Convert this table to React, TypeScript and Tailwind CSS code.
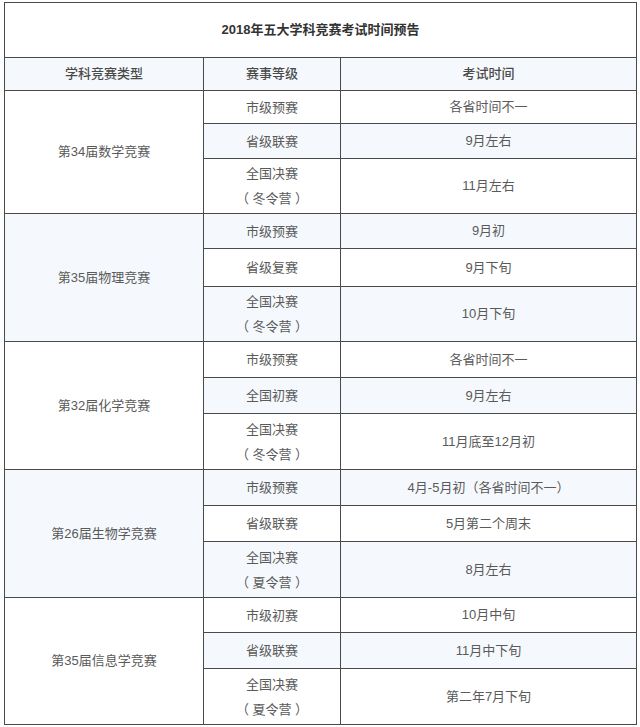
const groups = [
  {
    name: "第34届数学竞赛",
    h: ["h-[33px]", "h-[35px]", "h-[55px]"],
    rows: [
      ["市级预赛", "各省时间不一"],
      ["省级联赛", "9月左右"],
      ["全国决赛|（ 冬令营 ）", "11月左右"],
    ],
  },
  {
    name: "第35届物理竞赛",
    h: ["h-[35px]", "h-[38px]", "h-[55px]"],
    rows: [
      ["市级预赛", "9月初"],
      ["省级复赛", "9月下旬"],
      ["全国决赛|（ 冬令营 ）", "10月下旬"],
    ],
  },
  {
    name: "第32届化学竞赛",
    h: ["h-[36px]", "h-[36px]", "h-[56px]"],
    rows: [
      ["市级预赛", "各省时间不一"],
      ["全国初赛", "9月左右"],
      ["全国决赛|（ 冬令营 ）", "11月底至12月初"],
    ],
  },
  {
    name: "第26届生物学竞赛",
    h: ["h-[36px]", "h-[36px]", "h-[56px]"],
    rows: [
      ["市级预赛", "4月-5月初（各省时间不一）"],
      ["省级联赛", "5月第二个周末"],
      ["全国决赛|（ 夏令营 ）", "8月左右"],
    ],
  },
  {
    name: "第35届信息学竞赛",
    h: ["h-[35px]", "h-[36px]", "h-[56px]"],
    rows: [
      ["市级初赛", "10月中旬"],
      ["省级联赛", "11月中下旬"],
      ["全国决赛|（ 夏令营 ）", "第二年7月下旬"],
    ],
  },
];

const cell = "border border-[#4a4a4a] text-center align-middle px-2";

export default function App() {
  let rowIndex = 2;
  return (
    <div className="bg-white w-[640px] h-[727px] pt-[2px] pl-[4px] font-['Liberation_Sans','Noto_Sans_CJK_SC',sans-serif] text-[13px] text-[#5a5a5a]">
      <table className="border-collapse w-[632px] table-fixed">
        <colgroup>
          <col className="w-[199px]" />
          <col className="w-[137px]" />
          <col className="w-[296px]" />
        </colgroup>
        <tbody>
          <tr className="h-[55px] bg-white">
            <td colSpan={3} className={`${cell} font-bold text-[#333]`}>
              2018年五大学科竞赛考试时间预告
            </td>
          </tr>
          <tr className="h-[33px] bg-[#f5f9fd] font-medium text-[#4a4a4a]">
            <td className={cell}>学科竞赛类型</td>
            <td className={cell}>赛事等级</td>
            <td className={cell}>考试时间</td>
          </tr>
          {groups.map((g) =>
            g.rows.map((r, i) => {
              const bg = rowIndex++ % 2 === 0 ? "bg-white" : "bg-[#f5f9fd]";
              const lines = r[0].split("|");
              return (
                <tr key={g.name + i} className={`${g.h[i]} ${bg}`}>
                  {i === 0 && (
                    <td rowSpan={3} className={cell}>
                      {g.name}
                    </td>
                  )}
                  <td className={`${cell} leading-[25px]`}>
                    {lines.map((l) => (
                      <div key={l} className="whitespace-pre">{l}</div>
                    ))}
                  </td>
                  <td className={cell}>{r[1]}</td>
                </tr>
              );
            })
          )}
        </tbody>
      </table>
    </div>
  );
}
